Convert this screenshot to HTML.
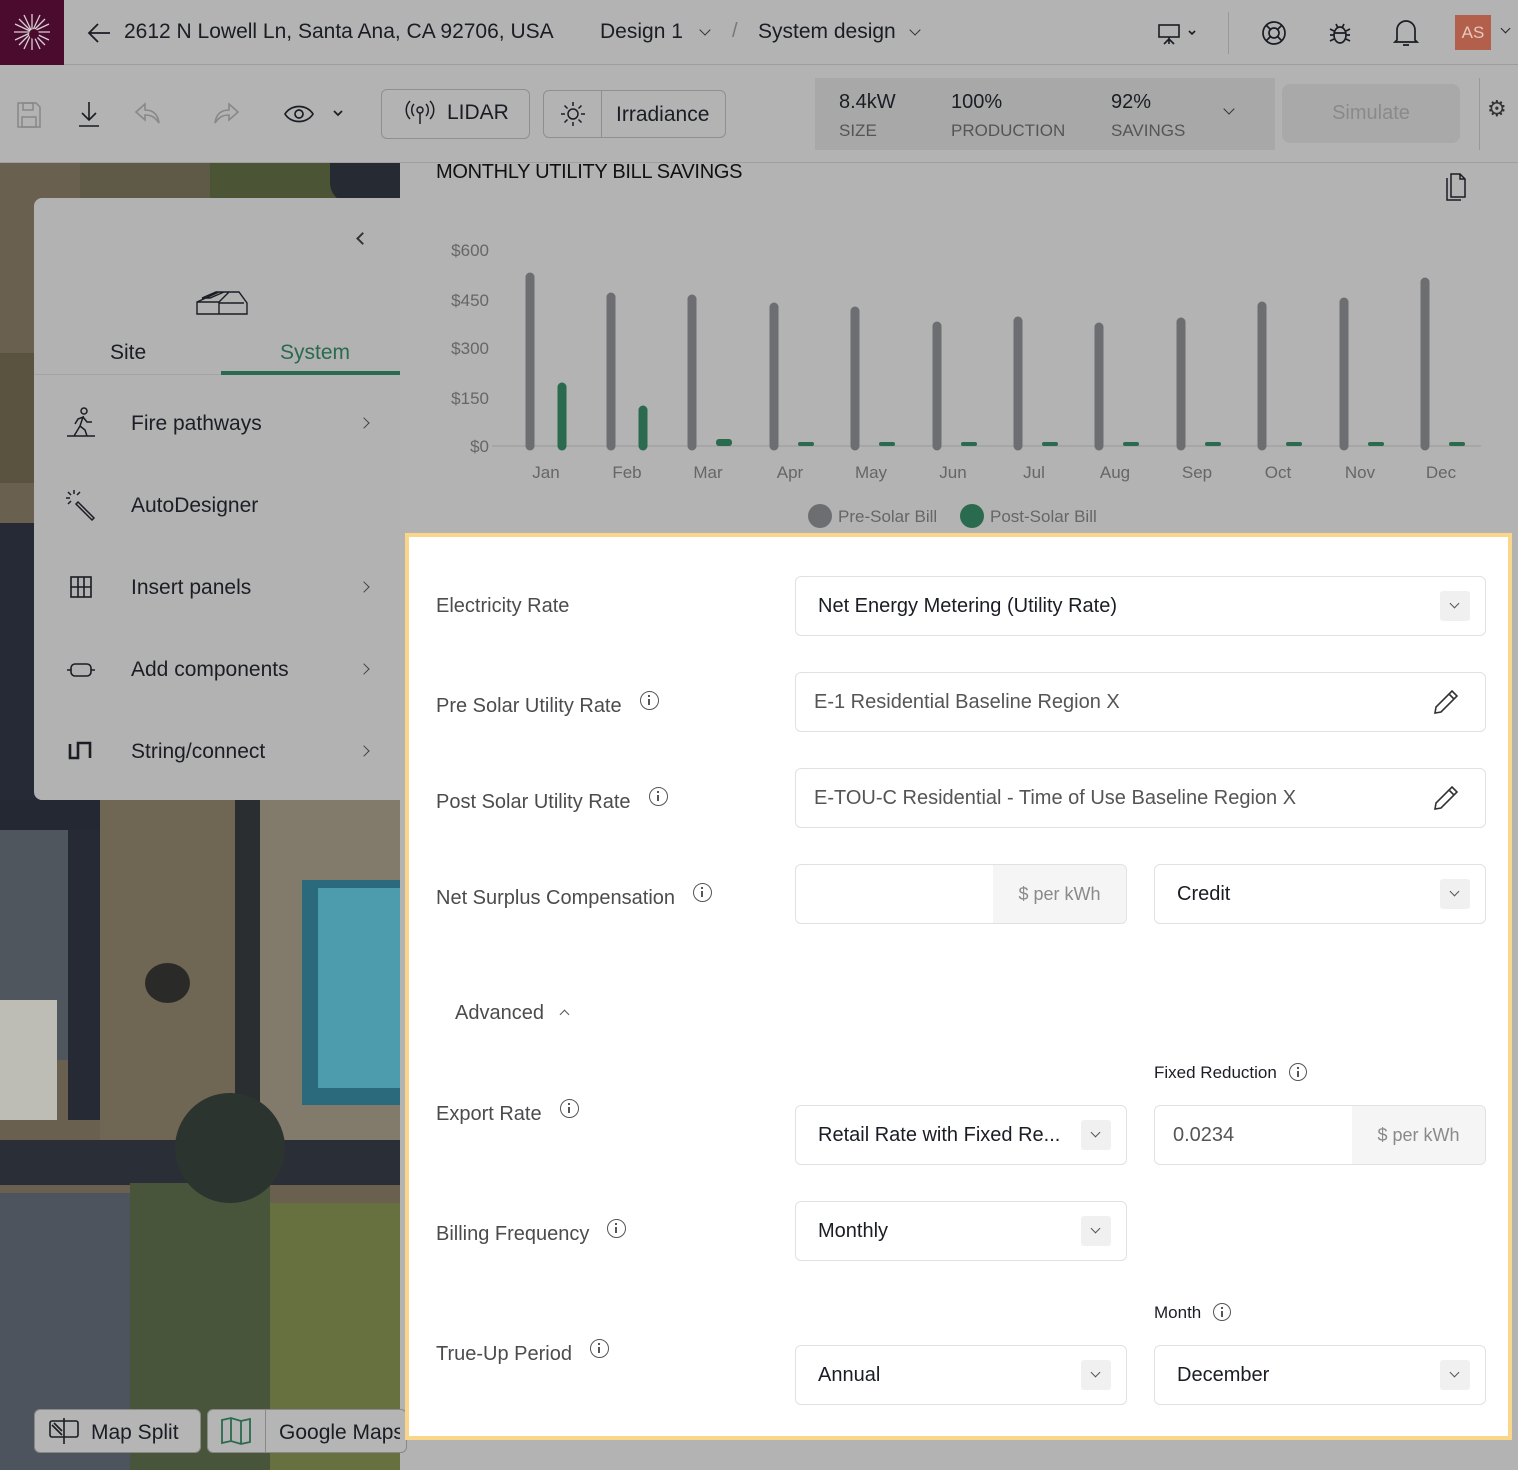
<!DOCTYPE html>
<html><head><meta charset="utf-8">
<style>
*{box-sizing:border-box;margin:0;padding:0}
body{width:1518px;height:1470px;overflow:hidden;background:#b3b3b3;font-family:"Liberation Sans",sans-serif;position:relative;color:#1a1d24}
.a{position:absolute}
.lbl{position:absolute;left:436px;font-size:20px;color:#4c4c4f;white-space:nowrap}
.info{display:inline-block;width:19px;height:19px;border:1.6px solid #555;border-radius:50%;vertical-align:2px;margin-left:18px;position:relative}
.info:before{content:"";position:absolute;left:7px;top:3px;width:2px;height:2px;background:#555}
.info:after{content:"";position:absolute;left:7px;top:7px;width:2px;height:6px;background:#555}
.box{position:absolute;border:1px solid #e1e1e4;border-radius:6px;background:#fff;font-size:20px;color:#1a1d24;display:flex;align-items:center;padding-left:22px;white-space:nowrap;overflow:hidden}
.chev{position:absolute;right:15px;top:14px;width:30px;height:30px;background:#f0f0f0;border-radius:3px}
.chev:after{content:"";position:absolute;left:11px;top:9px;width:6px;height:6px;border-right:1.4px solid #555;border-bottom:1.4px solid #555;transform:rotate(45deg)}
.unit{position:absolute;right:0;top:0;bottom:0;background:#f5f5f5;color:#8a8a8a;font-size:18px;display:flex;align-items:center;justify-content:center}
.mi{position:absolute;left:131px;font-size:20px;color:#1c1e26}
.arr{position:absolute;left:360px;width:8px;height:8px;border-right:1.6px solid #444;border-top:1.6px solid #444;transform:rotate(45deg)}
.tb{font-size:20px;color:#1a1d24}
.dd{position:absolute;width:8px;height:8px;border-right:1.5px solid #333;border-bottom:1.5px solid #333;transform:rotate(45deg)}
</style></head><body>

<!-- top bar -->
<div class="a" style="left:0;top:0;width:1518px;height:65px;border-bottom:1px solid #9d9d9d"></div>
<div class="a" style="left:0;top:0;width:64px;height:65px;background:#4b0b2e"></div>
<svg class="a" style="left:12px;top:12px" width="40" height="40" viewBox="0 0 40 40"><g stroke="#d8d0d4" stroke-width="1.3">
<line x1="20" y1="2" x2="20" y2="38"/><line x1="2" y1="20" x2="38" y2="20"/><line x1="7" y1="7" x2="33" y2="33"/><line x1="33" y1="7" x2="7" y2="33"/><line x1="12" y1="3" x2="28" y2="37"/><line x1="28" y1="3" x2="12" y2="37"/><line x1="3" y1="12" x2="37" y2="28"/><line x1="3" y1="28" x2="37" y2="12"/></g><circle cx="22" cy="22" r="5" fill="#4b0b2e"/></svg>
<svg class="a" style="left:86px;top:21px" width="26" height="24" viewBox="0 0 26 24" fill="none" stroke="#1a1d24" stroke-width="1.8"><path d="M24 12H3M12 3l-9 9 9 9"/></svg>
<div class="a tb" style="left:124px;top:20px;font-size:21px">2612 N Lowell Ln, Santa Ana, CA 92706, USA</div>
<div class="a tb" style="left:600px;top:20px;font-size:21px">Design 1</div>
<div class="dd" style="left:701px;top:26px"></div>
<div class="a tb" style="left:732px;top:20px;color:#777">/</div>
<div class="a tb" style="left:758px;top:20px;font-size:21px">System design</div>
<div class="dd" style="left:911px;top:26px"></div>
<svg class="a" style="left:1157px;top:22px" width="44" height="24" viewBox="0 0 44 24" fill="none" stroke="#1a1d24" stroke-width="1.6"><rect x="2" y="3" width="20" height="12"/><path d="M12 15v7M12 17l-5 5M12 17l5 5M32 9l3 3 3-3"/></svg>
<div class="a" style="left:1228px;top:12px;width:1px;height:42px;background:#999"></div>
<svg class="a" style="left:1260px;top:19px" width="28" height="28" viewBox="0 0 28 28" fill="none" stroke="#1a1d24" stroke-width="1.7"><circle cx="14" cy="14" r="11"/><circle cx="14" cy="14" r="5"/><path d="M6 6l4.5 4.5M22 6l-4.5 4.5M6 22l4.5-4.5M22 22l-4.5-4.5"/></svg>
<svg class="a" style="left:1326px;top:19px" width="28" height="28" viewBox="0 0 28 28" fill="none" stroke="#1a1d24" stroke-width="1.7"><ellipse cx="14" cy="16" rx="6" ry="8"/><path d="M8 14h12M4 10l4 2M24 10l-4 2M4 22l4-2M24 22l-4-2M4 16h4M20 16h4M10 5l2 4M18 5l-2 4"/></svg>
<svg class="a" style="left:1393px;top:18px" width="26" height="30" viewBox="0 0 26 30" fill="none" stroke="#1a1d24" stroke-width="1.7"><path d="M4 22V12a9 9 0 0 1 18 0v10l2 2H2zM10 27h6"/></svg>
<div class="a" style="left:1455px;top:15px;width:36px;height:35px;background:#b2604b;color:#e8c8bf;font-size:17px;text-align:center;line-height:35px">AS</div>
<div class="a" style="left:1502px;top:25px;width:7px;height:7px;border-right:1.5px solid #222;border-bottom:1.5px solid #222;transform:rotate(45deg)"></div>

<!-- toolbar -->
<svg class="a" style="left:16px;top:101px" width="26" height="28" viewBox="0 0 26 28" fill="none" stroke="#888" stroke-width="1.5"><path d="M2 2h18l4 4v20H2z"/><rect x="7" y="2" width="10" height="7"/><rect x="6" y="16" width="14" height="10"/></svg>
<svg class="a" style="left:76px;top:100px" width="26" height="28" viewBox="0 0 26 28" fill="none" stroke="#1a1d24" stroke-width="1.6"><path d="M13 2v18M6 13l7 7 7-7M3 26h20"/></svg>
<svg class="a" style="left:134px;top:100px" width="28" height="26" viewBox="0 0 28 26" fill="none" stroke="#888" stroke-width="1.6"><path d="M11 4L2 12l9 8v-5c6 0 10 2 14 8-1-8-5-13-14-13z"/></svg>
<svg class="a" style="left:212px;top:100px" width="28" height="26" viewBox="0 0 28 26" fill="none" stroke="#888" stroke-width="1.6"><path d="M17 4l9 8-9 8v-5c-6 0-10 2-14 8 1-8 5-13 14-13z"/></svg>
<svg class="a" style="left:283px;top:102px" width="64" height="24" viewBox="0 0 64 24" fill="none" stroke="#1a1d24" stroke-width="1.7"><path d="M2 12c6-10 22-10 28 0-6 10-22 10-28 0z"/><circle cx="16" cy="12" r="4"/><path d="M51 9l4 4 4-4"/></svg>
<div class="a" style="left:381px;top:89px;width:149px;height:50px;border:1.5px solid #8f8f8f;border-radius:6px"></div>
<svg class="a" style="left:405px;top:100px" width="30" height="26" viewBox="0 0 30 26" fill="none" stroke="#1a1d24" stroke-width="1.5"><circle cx="15" cy="10" r="3"/><path d="M15 13v11M9 4c-3 3-3 9 0 12M21 4c3 3 3 9 0 12M5 1c-5 5-5 13 0 18M25 1c5 5 5 13 0 18"/></svg>
<div class="a tb" style="left:447px;top:101px;font-size:21px">LIDAR</div>
<div class="a" style="left:543px;top:90px;width:183px;height:48px;border:1.5px solid #8f8f8f;border-radius:6px"></div>
<div class="a" style="left:601px;top:91px;width:1px;height:46px;background:#8f8f8f"></div>
<svg class="a" style="left:559px;top:100px" width="28" height="28" viewBox="0 0 28 28" fill="none" stroke="#1a1d24" stroke-width="1.5"><circle cx="14" cy="14" r="5"/><path d="M14 2v4M14 22v4M2 14h4M22 14h4M5.5 5.5l3 3M19.5 19.5l3 3M5.5 22.5l3-3M19.5 8.5l3-3"/></svg>
<div class="a tb" style="left:616px;top:103px;font-size:21px">Irradiance</div>
<div class="a" style="left:815px;top:78px;width:460px;height:72px;background:#a8a8a8"></div>
<div class="a tb" style="left:839px;top:91px">8.4kW</div>
<div class="a" style="left:839px;top:121px;font-size:17px;color:#555">SIZE</div>
<div class="a tb" style="left:951px;top:91px">100%</div>
<div class="a" style="left:951px;top:121px;font-size:17px;color:#555">PRODUCTION</div>
<div class="a tb" style="left:1111px;top:91px">92%</div>
<div class="a" style="left:1111px;top:121px;font-size:17px;color:#555">SAVINGS</div>
<div class="a" style="left:1225px;top:105px;width:8px;height:8px;border-right:1.5px solid #333;border-bottom:1.5px solid #333;transform:rotate(45deg)"></div>
<div class="a" style="left:1282px;top:84px;width:178px;height:59px;background:#a9a9a9;border-radius:8px;color:#8a8a8a;font-size:20px;text-align:center;line-height:59px">Simulate</div>
<div class="a" style="left:1479px;top:78px;width:1px;height:72px;background:#999"></div>
<div class="a" style="left:1487px;top:96px;font-size:22px;color:#333">&#9881;</div>
<div class="a" style="left:0;top:162px;width:1518px;height:1px;background:#a0a0a0"></div>

<!-- map -->
<div class="a" style="left:0;top:163px;width:400px;height:1307px;background:#6a6050;overflow:hidden">
 <div class="a" style="left:80px;top:0;width:140px;height:40px;background:#5f5a48"></div>
 <div class="a" style="left:210px;top:0;width:130px;height:40px;background:#4c5436"></div>
 <div class="a" style="left:330px;top:0;width:70px;height:40px;background:#262b33;border-radius:0 0 0 20px"></div>
 <div class="a" style="left:0;top:190px;width:40px;height:130px;background:#5a5340"></div>
 <div class="a" style="left:0;top:360px;width:40px;height:350px;background:#252a36"></div>
 <div class="a" style="left:0;top:637px;width:100px;height:30px;background:#232832"></div>
 <div class="a" style="left:0;top:667px;width:68px;height:230px;background:#50565e"></div>
 <div class="a" style="left:68px;top:667px;width:35px;height:290px;background:#262a34"></div>
 <div class="a" style="left:0;top:837px;width:57px;height:120px;background:#bdbdb5"></div>
 <div class="a" style="left:100px;top:637px;width:135px;height:340px;background:#706654"></div>
 <div class="a" style="left:235px;top:637px;width:25px;height:360px;background:#2a2e30"></div>
 <div class="a" style="left:260px;top:637px;width:140px;height:340px;background:#827a6a"></div>
 <div class="a" style="left:302px;top:717px;width:100px;height:225px;background:#2b6a7c"></div>
 <div class="a" style="left:318px;top:725px;width:82px;height:200px;background:#4d9cad"></div>
 <div class="a" style="left:0;top:977px;width:400px;height:45px;background:#2a2e36"></div>
 <div class="a" style="left:0;top:1030px;width:130px;height:280px;background:#4e545e"></div>
 <div class="a" style="left:130px;top:1020px;width:140px;height:290px;background:#48553a"></div>
 <div class="a" style="left:270px;top:1040px;width:130px;height:270px;background:#66713f"></div>
 <div class="a" style="left:175px;top:930px;width:110px;height:110px;background:#2c3430;border-radius:50%"></div>
 <div class="a" style="left:145px;top:800px;width:45px;height:40px;background:#2a2a28;border-radius:50%"></div>
</div>
<div class="a" style="left:34px;top:1409px;width:167px;height:44px;background:#b5b5b5;border:1px solid #888;border-radius:6px"></div>
<svg class="a" style="left:48px;top:1417px" width="32" height="28" viewBox="0 0 32 28" fill="none" stroke="#1a1d24" stroke-width="1.6"><rect x="2" y="4" width="28" height="16" rx="2"/><path d="M16 1v26M4 8l10 10M6 6l8 8"/></svg>
<div class="a tb" style="left:91px;top:1421px;font-size:21px">Map Split</div>
<div class="a" style="left:207px;top:1409px;width:200px;height:44px;background:#b5b5b5;border:1px solid #888;border-radius:6px"></div>
<div class="a" style="left:265px;top:1410px;width:1px;height:42px;background:#888"></div>
<svg class="a" style="left:220px;top:1416px" width="32" height="30" viewBox="0 0 32 30" fill="none" stroke="#2a6a4e" stroke-width="1.8"><path d="M2 4l9-2 10 3 9-2v23l-9 2-10-3-9 2zM11 2v23M21 5v23"/></svg>
<div class="a tb" style="left:279px;top:1421px;white-space:nowrap;width:121px;overflow:hidden;font-size:21px">Google Maps</div>

<!-- sidebar -->
<div class="a" style="left:34px;top:198px;width:366px;height:602px;background:#b2b2b2;border-radius:8px 0 0 8px"></div>
<div class="a" style="left:358px;top:234px;width:9px;height:9px;border-left:2px solid #333;border-bottom:2px solid #333;transform:rotate(45deg)"></div>
<svg class="a" style="left:194px;top:282px" width="56" height="36" viewBox="0 0 56 36" fill="none" stroke="#1a1d24" stroke-width="1.4"><path d="M3 20l22-10 20 0 8 11v11H25L3 32z M3 20h22v12M25 20l10-10M45 10l8 11M25 21l25 0M8 16l14-6 8 0-14 6z M14 14l10-4"/></svg>
<div class="a" style="left:110px;top:341px;font-size:21px">Site</div>
<div class="a" style="left:280px;top:341px;font-size:21px;color:#2a6a4e">System</div>
<div class="a" style="left:34px;top:374px;width:366px;height:1px;background:#a4a4a4"></div>
<div class="a" style="left:221px;top:371px;width:179px;height:4px;background:#2a6a4e"></div>
<svg class="a" style="left:66px;top:406px" width="30" height="32" viewBox="0 0 30 32" fill="none" stroke="#1a1d24" stroke-width="1.5"><circle cx="18" cy="5" r="3"/><path d="M1 30h28M8 30l6-10 5 4 2 6M14 20l3-9-5 2-3 5M17 11l4 5 5 0"/></svg>
<div class="mi" style="top:412px;font-size:21px">Fire pathways</div><div class="arr" style="top:419px"></div>
<svg class="a" style="left:64px;top:488px" width="34" height="34" viewBox="0 0 34 34" fill="none" stroke="#1a1d24" stroke-width="1.5"><path d="M14 14l16 16 -2 2 -16-16zM10 2v4M2 10h4M4 4l3 3M16 4l-3 3M4 16l3-3"/></svg>
<div class="mi" style="top:494px;font-size:21px">AutoDesigner</div>
<svg class="a" style="left:70px;top:576px" width="22" height="22" viewBox="0 0 22 22" fill="none" stroke="#1a1d24" stroke-width="1.6"><rect x="1" y="1" width="20" height="20"/><path d="M8 1v20M14 1v20M1 11h20"/></svg>
<div class="mi" style="top:576px;font-size:21px">Insert panels</div><div class="arr" style="top:583px"></div>
<svg class="a" style="left:66px;top:660px" width="30" height="20" viewBox="0 0 30 20" fill="none" stroke="#1a1d24" stroke-width="1.6"><rect x="5" y="4" width="20" height="12" rx="4"/><path d="M1 10h4M25 10h4"/></svg>
<div class="mi" style="top:658px;font-size:21px">Add components</div><div class="arr" style="top:665px"></div>
<svg class="a" style="left:68px;top:740px" width="26" height="20" viewBox="0 0 26 20" fill="none" stroke="#1a1d24" stroke-width="2.6"><path d="M2 4v14h8V3h12v15"/></svg>
<div class="mi" style="top:740px;font-size:21px">String/connect</div><div class="arr" style="top:747px"></div>

<!-- chart -->
<div class="a" style="left:436px;top:161px;font-size:20px;color:#111;letter-spacing:-0.3px">MONTHLY UTILITY BILL SAVINGS</div>
<svg class="a" style="left:1444px;top:172px" width="24" height="30" viewBox="0 0 24 30" fill="none" stroke="#1a1d24" stroke-width="1.5"><path d="M7 2h9l5 5v18H7zM16 2v5h5M3 6v22h14"/></svg>
<svg class="a" style="left:400px;top:230px" width="1118" height="300" viewBox="400 230 1118 300">
<g font-family="Liberation Sans,sans-serif" font-size="17" fill="#666" text-anchor="end">
<text x="489" y="256">$600</text><text x="489" y="306">$450</text><text x="489" y="354">$300</text><text x="489" y="404">$150</text><text x="489" y="452">$0</text></g>
<line x1="492" y1="446" x2="1481" y2="446" stroke="#999" stroke-width="1"/>
<g stroke-linecap="round" stroke-width="9">
<g stroke="#6d6e72">
<line x1="530" y1="277" x2="530" y2="446"/><line x1="611" y1="297" x2="611" y2="446"/><line x1="692" y1="299" x2="692" y2="446"/><line x1="774" y1="307" x2="774" y2="446"/><line x1="855" y1="311" x2="855" y2="446"/><line x1="937" y1="326" x2="937" y2="446"/><line x1="1018" y1="321" x2="1018" y2="446"/><line x1="1099" y1="327" x2="1099" y2="446"/><line x1="1181" y1="322" x2="1181" y2="446"/><line x1="1262" y1="306" x2="1262" y2="446"/><line x1="1344" y1="302" x2="1344" y2="446"/><line x1="1425" y1="282" x2="1425" y2="446"/></g>
<g stroke="#2a6a4e">
<line x1="562" y1="387" x2="562" y2="446"/><line x1="643" y1="410" x2="643" y2="446"/></g></g>
<g fill="#2a6a4e">
<rect x="716" y="439" width="16" height="7" rx="3"/><rect x="798" y="442" width="16" height="4" rx="2"/><rect x="879" y="442" width="16" height="4" rx="2"/><rect x="961" y="442" width="16" height="4" rx="2"/><rect x="1042" y="442" width="16" height="4" rx="2"/><rect x="1123" y="442" width="16" height="4" rx="2"/><rect x="1205" y="442" width="16" height="4" rx="2"/><rect x="1286" y="442" width="16" height="4" rx="2"/><rect x="1368" y="442" width="16" height="4" rx="2"/><rect x="1449" y="442" width="16" height="4" rx="2"/></g>
<g font-family="Liberation Sans,sans-serif" font-size="17" fill="#666" text-anchor="middle">
<text x="546" y="478">Jan</text><text x="627" y="478">Feb</text><text x="708" y="478">Mar</text><text x="790" y="478">Apr</text><text x="871" y="478">May</text><text x="953" y="478">Jun</text><text x="1034" y="478">Jul</text><text x="1115" y="478">Aug</text><text x="1197" y="478">Sep</text><text x="1278" y="478">Oct</text><text x="1360" y="478">Nov</text><text x="1441" y="478">Dec</text></g>
<ellipse cx="820" cy="516" rx="12" ry="12" fill="#6d6e72"/><ellipse cx="972" cy="516" rx="12" ry="12" fill="#2a6a4e"/>
<g font-family="Liberation Sans,sans-serif" font-size="17" fill="#666"><text x="838" y="522">Pre-Solar Bill</text><text x="990" y="522">Post-Solar Bill</text></g>
</svg>

<!-- form panel -->
<div class="a" style="left:405px;top:533px;width:1107px;height:907px;background:#fff;border:4px solid #f9d68a"></div>
<div class="lbl" style="top:595px">Electricity Rate</div>
<div class="box" style="left:795px;top:576px;width:691px;height:60px">Net Energy Metering (Utility Rate)<div class="chev"></div></div>
<div class="lbl" style="top:691px">Pre Solar Utility Rate<span class="info"></span></div>
<div class="box" style="left:795px;top:672px;width:691px;height:60px;padding-left:18px;color:#555">E-1 Residential Baseline Region X</div>
<div class="lbl" style="top:787px">Post Solar Utility Rate<span class="info"></span></div>
<div class="box" style="left:795px;top:768px;width:691px;height:60px;padding-left:18px;color:#555">E-TOU-C Residential - Time of Use Baseline Region X</div>
<svg class="a" style="left:1432px;top:688px" width="28" height="28" viewBox="0 0 28 28" fill="none" stroke="#333" stroke-width="1.6"><path d="M20 3l5 5L9 24l-6 1 1-6zM17 6l5 5"/></svg>
<svg class="a" style="left:1432px;top:784px" width="28" height="28" viewBox="0 0 28 28" fill="none" stroke="#333" stroke-width="1.6"><path d="M20 3l5 5L9 24l-6 1 1-6zM17 6l5 5"/></svg>
<div class="lbl" style="top:883px">Net Surplus Compensation<span class="info"></span></div>
<div class="box" style="left:795px;top:864px;width:332px;height:60px"><div class="unit" style="width:133px">$ per kWh</div></div>
<div class="box" style="left:1154px;top:864px;width:332px;height:60px">Credit<div class="chev"></div></div>
<div class="a" style="left:455px;top:1002px;font-size:20px;color:#4c4c4f">Advanced</div>
<div class="a" style="left:561px;top:1011px;width:7px;height:7px;border-left:1.4px solid #555;border-top:1.4px solid #555;transform:rotate(45deg)"></div>
<div class="a" style="left:1154px;top:1063px;font-size:17px;color:#1a1d24">Fixed Reduction<span class="info" style="margin-left:12px;width:18px;height:18px;vertical-align:-3px"></span></div>
<div class="lbl" style="top:1099px">Export Rate<span class="info"></span></div>
<div class="box" style="left:795px;top:1105px;width:332px;height:60px">Retail Rate with Fixed Re...<div class="chev"></div></div>
<div class="box" style="left:1154px;top:1105px;width:332px;height:60px;padding-left:18px;color:#555">0.0234<div class="unit" style="width:133px">$ per kWh</div></div>
<div class="lbl" style="top:1219px">Billing Frequency<span class="info"></span></div>
<div class="box" style="left:795px;top:1201px;width:332px;height:60px">Monthly<div class="chev"></div></div>
<div class="a" style="left:1154px;top:1303px;font-size:17px;color:#1a1d24">Month<span class="info" style="margin-left:12px;width:18px;height:18px;vertical-align:-3px"></span></div>
<div class="lbl" style="top:1339px">True-Up Period<span class="info"></span></div>
<div class="box" style="left:795px;top:1345px;width:332px;height:60px">Annual<div class="chev"></div></div>
<div class="box" style="left:1154px;top:1345px;width:332px;height:60px">December<div class="chev"></div></div>
</body></html>
